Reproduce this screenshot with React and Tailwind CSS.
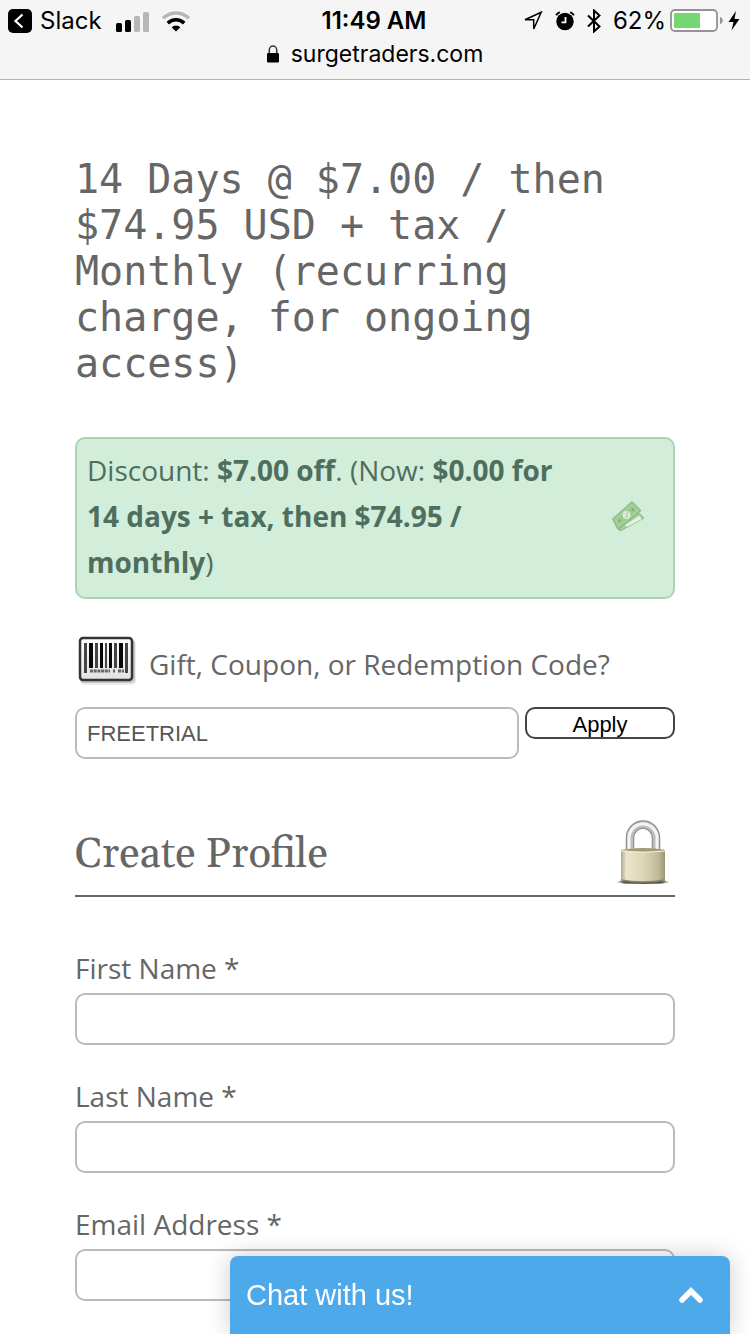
import React, { useState } from 'react';

const profileFields = [
  { id: 'first-name', label: 'First Name *', type: 'text' },
  { id: 'last-name', label: 'Last Name *', type: 'text' },
  { id: 'email', label: 'Email Address *', type: 'email' },
];

function BackIcon() {
  return (
    <svg width="24" height="24" viewBox="0 0 24 24" aria-hidden="true">
      <rect width="24" height="24" rx="5" fill="#000" />
      <path d="M14.5 5.5 7.5 12l7 6.500" fill="none" stroke="#fff" strokeWidth="2.2" />
    </svg>
  );
}

function SignalIcon() {
  return (
    <svg width="34" height="21" viewBox="0 0 34 21" aria-hidden="true">
      <rect x="0" y="12" width="6" height="9" rx="1.500" />
      <rect x="9" y="9" width="6" height="12" rx="1.500" />
      <rect x="18" y="5" width="6" height="16" rx="1.500" fill="#b7b7b7" />
      <rect x="27" y="1" width="6" height="20" rx="1.500" fill="#b7b7b7" />
    </svg>
  );
}

function WifiIcon() {
  return (
    <svg width="28" height="21" viewBox="0 0 28 21" fill="none" aria-hidden="true">
      <path d="M1 7.300a18.500 18.500 0 0 1 26 0" stroke="#b7b7b7" strokeWidth="3.600" />
      <path d="M5.800 12.100a11.700 11.700 0 0 1 16.400 0" stroke="#000" strokeWidth="3.600" />
      <path d="M14 20.500 9.600 16.200a6.300 6.300 0 0 1 8.800 0z" fill="#000" />
    </svg>
  );
}

function LocationIcon() {
  return (
    <svg width="20" height="20" viewBox="0 0 20 20" fill="none" aria-hidden="true">
      <path d="M18.200 1.200 2 8.700h8.700v9.300z" stroke="#000" strokeWidth="1.500" />
    </svg>
  );
}

function AlarmIcon() {
  return (
    <svg width="20" height="20" viewBox="0 0 20 20" fill="none" aria-hidden="true">
      <circle cx="10" cy="10.500" r="8.700" fill="#000" />
      <path d="M1 4.300a9 9 0 0 1 3.800-3.200M19 4.300a9 9 0 0 0-3.800-3.200" stroke="#000" strokeWidth="1.800" />
      <path d="M10.500 6v5.300H6.500" stroke="#fff" strokeWidth="1.800" />
    </svg>
  );
}

function BluetoothIcon() {
  return (
    <svg width="14" height="24" viewBox="0 0 14 24" fill="none" aria-hidden="true">
      <path d="m1 6.500 11.500 11L7 22.500v-21l5.500 5L1 17.500" stroke="#000" strokeWidth="2" />
    </svg>
  );
}

function BatteryIcon() {
  return (
    <svg width="54" height="24" viewBox="0 0 54 24" aria-hidden="true">
      <rect x="1" y="1" width="46" height="21" rx="4" fill="#fff" stroke="#939393" strokeWidth="1.800" />
      <rect x="4" y="4" width="26" height="15" rx="1" fill="#76d672" />
      <path d="M50 8c3.600 1.200 3.600 6 0 7.200z" fill="#939393" />
    </svg>
  );
}

function BoltIcon() {
  return (
    <svg width="12" height="20" viewBox="0 0 12 20" aria-hidden="true">
      <path d="M8 0 .5 11h5L3.500 19.500 11.500 8H6.500z" />
    </svg>
  );
}

function SmallLock() {
  return (
    <svg width="12" height="18" viewBox="0 0 12 18" aria-hidden="true">
      <path d="M2.300 9V5a3.700 4 0 0 1 7.400 0v4" fill="none" stroke="#333" strokeWidth="1.500" />
      <rect y="8" width="12" height="9.500" rx="1.200" />
    </svg>
  );
}

function MoneyIcon() {
  return (
    <svg className="shrink-0" width="34" height="34" viewBox="0 0 34 34" aria-hidden="true">
      <path d="m8 28 20-14 5 5L9 32z" fill="#a9d0a2" stroke="#86b57f" />
      <path d="m14 26 14-9 3 3-15 8z" fill="#e3f1de" />
      <path d="M1.500 20 21 2.500l9 9L7 30.500z" fill="#9aca90" stroke="#83b57b" />
      <path d="M4.500 20.500 20.500 6l6 6L8 27z" fill="none" stroke="#b3d8ab" />
      <circle cx="15.500" cy="16" r="4" fill="#dcecd8" />
      <path d="M14.500 18c2 .8 2.500-1 1.300-2s.3-3 1.500-2" fill="none" stroke="#a3bf9e" />
      <circle cx="8.500" cy="21.500" r="1.200" fill="#79ae71" />
      <circle cx="22" cy="10.500" r="1.200" fill="#79ae71" />
    </svg>
  );
}

// x, width and whether the bar is one of the tall grey ones
const bars = [
  [9, 3, 1], [14, 4, 0], [20, 3, 1], [25, 3, 0], [30, 2, 1], [34, 3, 0],
  [39, 3, 1], [44, 4, 0], [50, 3, 1],
];

function BarcodeIcon() {
  return (
    <svg width="62" height="52" viewBox="0 0 62 52" aria-hidden="true">
      <defs>
        <linearGradient id="card" x1="0" y1="0" x2="0" y2="1">
          <stop offset="0" stopColor="#fff" />
          <stop offset="1" stopColor="#e2e2e2" />
        </linearGradient>
      </defs>
      <rect x="5" y="5" width="56" height="45" rx="4" fill="#000" opacity=".07" />
      <rect x="5" y="5" width="55" height="43" rx="4" fill="#000" opacity=".16" />
      <rect x="5" y="3" width="52" height="42" rx="3" fill="url(#card)" stroke="#333" strokeWidth="2.500" />
      {bars.map(([x, w, tall]) => (
        <rect key={x} x={x} y="8" width={w} height={tall ? 30 : 25} fill={tall ? '#444' : '#080808'} />
      ))}
      <rect x="13" y="33" width="36" height="6" fill="#e6e6e6" />
      <path d="M15 36h20M38 36h2M43 36h6" stroke="#666" strokeWidth="3" strokeDasharray="3 .7" />
    </svg>
  );
}

function PadlockIcon() {
  return (
    <svg width="56" height="66" viewBox="0 0 56 66" aria-hidden="true">
      <defs>
        <linearGradient id="brass" x1="0" y1="0" x2="1" y2="0">
          <stop offset="0" stopColor="#b0a888" />
          <stop offset=".12" stopColor="#ebe5cc" />
          <stop offset=".5" stopColor="#ddd6b8" />
          <stop offset=".85" stopColor="#c0b898" />
          <stop offset="1" stopColor="#9d9576" />
        </linearGradient>
        <linearGradient id="base" x1="0" y1="0" x2="1" y2="0">
          <stop offset="0" stopColor="#555" stopOpacity="0" />
          <stop offset=".15" stopColor="#555" />
          <stop offset=".85" stopColor="#555" />
          <stop offset="1" stopColor="#555" stopOpacity="0" />
        </linearGradient>
      </defs>
      <ellipse cx="28" cy="63" rx="27" ry="2" fill="url(#base)" />
      <path d="M15 33V19a13 13.500 0 0 1 26 0v14" fill="none" stroke="#858585" strokeWidth="8.500" />
      <path d="M15 33V19a13 13.500 0 0 1 26 0v14" fill="none" stroke="#bdbdbd" strokeWidth="6.500" />
      <path d="M14 33V19a14 14 0 0 1 28 0v14" fill="none" stroke="#f5f5f5" strokeWidth="3" />
      <path d="M6 31q22-4 44 0v30q-22 4-44 0z" fill="url(#brass)" />
      <path d="M6 31q22-4 44 0-22 3-44 0" fill="#a19977" />
      <path d="M6 32q22 3 44 0" fill="none" stroke="#f2edd8" />
      <path d="M6 61q22 4 44 0" fill="none" stroke="#8c8568" strokeWidth="1.500" />
    </svg>
  );
}

function BrowserBar() {
  return (
    <header className="h-20 border-b border-[#b2b2b2] bg-[#f5f5f5] font-['Inter',sans-serif] text-2xl text-black">
      <div className="grid h-[42px] grid-cols-[1fr_auto_1fr] items-center pl-2 pr-2.5">
        <div className="flex items-center">
          <button type="button" className="flex items-center gap-2">
            <BackIcon />
            Slack
          </button>
          <div className="ml-3.5 flex items-center gap-3">
            <SignalIcon />
            <WifiIcon />
          </div>
        </div>
        <p className="font-semibold">11:49 AM</p>
        <div className="flex items-center justify-end gap-3">
          <LocationIcon />
          <AlarmIcon />
          <BluetoothIcon />
          <div className="flex items-center gap-1">
            62%
            <BatteryIcon />
            <BoltIcon />
          </div>
        </div>
      </div>
      <div className="flex h-6 items-center justify-center gap-3 text-[23px]">
        <SmallLock />
        surgetraders.com
      </div>
    </header>
  );
}

function Field({ id, label, type }) {
  return (
    <div>
      <label htmlFor={id} className="block pb-1 leading-[42px]">{label}</label>
      <input
        id={id}
        type={type}
        className="block h-[52px] w-full rounded-[10px] border-2 border-[#bbb] bg-white px-2.5 outline-none"
      />
    </div>
  );
}

export default function App() {
  const [code, setCode] = useState('FREETRIAL');

  return (
    <div className="min-h-screen bg-white font-['Open_Sans',sans-serif] text-[28px] leading-[46px] text-[#666]">
      <BrowserBar />

      <main className="px-[10%] pt-[76px]">
        <h1 className="font-['DejaVu_Sans_Mono',monospace] text-[40px] leading-[46px]">
          14 Days @ $7.00 / then $74.95 USD + tax / Monthly (recurring charge, for ongoing access)
        </h1>

        <div className="mt-[51px] flex items-center justify-between gap-8 rounded-[10px] border-2 border-[#a9d5b3] bg-[#d2edda] pb-3 pl-2.5 pr-7 pt-2 text-[#4f6f5e]">
          <p>
            Discount: <strong>$7.00 off</strong>. (Now: <strong>$0.00 for 14 days + tax, then $74.95 / monthly</strong>)
          </p>
          <MoneyIcon />
        </div>

        <form className="mt-9" onSubmit={(e) => e.preventDefault()}>
          <label htmlFor="coupon" className="flex items-center gap-3">
            <BarcodeIcon />
            <span className="pt-1.5">Gift, Coupon, or Redemption Code?</span>
          </label>
          <div className="mt-5 flex items-start gap-1.5">
            <input
              id="coupon"
              type="text"
              value={code}
              onChange={(e) => setCode(e.target.value)}
              className="h-[52px] min-w-0 flex-1 rounded-[10px] border-2 border-[#bbb] bg-white px-2.5 pt-0.5 font-['Liberation_Sans',sans-serif] text-[22px] text-[#555] outline-none"
            />
            <button
              type="submit"
              className="h-8 w-1/4 rounded-[10px] border-2 border-[#444] bg-white pt-0.5 font-['Liberation_Sans',sans-serif] text-[22px] leading-7 text-black"
            >
              Apply
            </button>
          </div>
        </form>

        <section className="mt-[60px]">
          <div className="flex items-center justify-between border-b-2 border-[#666] pb-2.5 pr-1">
            <h2 className="pt-1.5 font-['Gelasio','Georgia','Liberation_Serif',serif] text-[42px]">Create Profile</h2>
            <PadlockIcon />
          </div>
          <div className="mt-[50px] flex flex-col gap-[30px]">
            {profileFields.map((field) => (
              <Field key={field.id} {...field} />
            ))}
          </div>
        </section>
      </main>

      <button
        type="button"
        className="fixed bottom-0 right-5 flex h-[78px] w-2/3 items-center justify-between rounded-t-lg bg-[#4da9e9] pl-4 pr-[26px] font-['Liberation_Sans',sans-serif] text-[29px] text-white shadow-[0_0_24px_rgba(0,0,0,0.2)]"
      >
        Chat with us!
        <svg width="26" height="18" viewBox="0 0 26 18" fill="none" aria-hidden="true">
          <path d="m4 14 9-9 9 9" stroke="#fff" strokeWidth="5.500" strokeLinecap="round" />
        </svg>
      </button>
    </div>
  );
}
